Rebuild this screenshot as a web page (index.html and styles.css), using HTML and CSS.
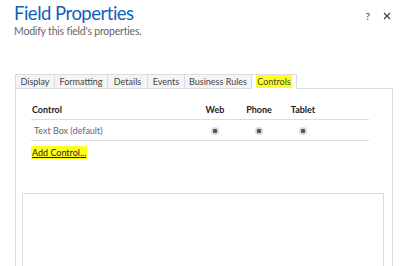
FILE: index.html
```html
<!DOCTYPE html>
<html lang="en">
<head>
    <meta charset="UTF-8">
    <title>Field Properties</title>
    <link rel="stylesheet" href="styles.css">
</head>
<body>
    <div class="dialog">
        <div class="header">
            <div class="titles">
                <h1>Field Properties</h1>
                <p class="subtitle">Modify this field's properties.</p>
            </div>
            <div class="actions">
                <span class="help">?</span>
                <svg class="close" width="8" height="8" viewBox="0 0 8 8">
                    <path d="M1 1 L7 7 M7 1 L1 7" stroke="#444" stroke-width="1.2" fill="none"/>
                </svg>
            </div>
        </div>
        <div class="tabs">
            <div class="tab tab-display">Display</div>
            <div class="tab tab-formatting">Formatting</div>
            <div class="tab tab-details">Details</div>
            <div class="tab tab-events">Events</div>
            <div class="tab tab-rules">Business Rules</div>
            <div class="tab tab-controls active"><span class="mark">Controls</span></div>
            <div class="tab-rest"></div>
        </div>
        <div class="panel">
            <div class="grid">
                <div class="row head">
                    <div class="col-name">Control</div>
                    <div class="col">Web</div>
                    <div class="col">Phone</div>
                    <div class="col">Tablet</div>
                </div>
                <div class="row">
                    <div class="col-name muted">Text Box (default)</div>
                    <div class="col"><span class="radio"></span></div>
                    <div class="col"><span class="radio"></span></div>
                    <div class="col"><span class="radio"></span></div>
                </div>
            </div>
            <div class="add"><span class="mark link">Add Control...</span></div>
            <div class="props"></div>
        </div>
    </div>
</body>
</html>
```
FILE: styles.css
```css
html, body {
    margin: 0;
    padding: 0;
    background-color: #fff;
    overflow: hidden;
}
body {
    font-family: Lato, "Noto Sans", sans-serif;
    color: #333;
}
.dialog {
    width: 400px;
    height: 266px;
}
.header {
    display: flex;
    justify-content: space-between;
    padding: 2px 0 0 14px;
}
h1 {
    margin: 0;
    font-size: 18.5px;
    font-weight: 400;
    line-height: 22px;
    color: #1160b7;
    letter-spacing: -0.5px;
}
.subtitle {
    margin: 0;
    font-size: 10.5px;
    line-height: 14px;
    color: #666;
    letter-spacing: -0.2px;
}
.actions {
    display: flex;
    align-items: center;
    gap: 13px;
    height: 16px;
    padding: 6px 9px 0 0;
    font-size: 10px;
    color: #444;
}
.tabs {
    display: flex;
    margin: 36px 0 0 15px;
    width: 378px;
    height: 15px;
    font-size: 9px;
    line-height: 14px;
}
.tab {
    box-sizing: border-box;
    border: 1px solid #ddd;
    border-left: none;
    background-color: #f4f4f4;
    text-align: center;
    color: #444;
}
.tab-display {
    border-left: 1px solid #ddd;
    width: 40px;
}
.tab-formatting { width: 53px; }
.tab-details { width: 40px; }
.tab-events { width: 37px; }
.tab-rules { width: 67px; }
.tab-controls {
    width: 45px;
    background-color: #fff;
    border-bottom: none;
}
.tab-rest {
    flex: 1;
    border-bottom: 1px solid #ddd;
}
.mark {
    background-color: #ffff20;
    padding: 1px 1px;
}
.panel {
    width: 378px;
    height: 200px;
    margin-left: 15px;
    box-sizing: border-box;
    border: 1px solid #ddd;
    border-top: none;
    padding: 10px 0 0 0;
}
.grid {
    margin-left: 15px;
    width: 338px;
    font-size: 9px;
}
.row {
    display: flex;
    align-items: center;
    height: 20px;
    border-bottom: 1px solid #ddd;
}
.head {
    font-weight: 700;
    color: #222;
}
.col-name {
    width: 161px;
    padding-left: 1px;
}
.muted {
    color: #666;
    padding-left: 3px;
    width: 159px;
}
.col {
    width: 44px;
    text-align: center;
}
.radio {
    display: inline-block;
    width: 8px;
    height: 8px;
    border-radius: 50%;
    background: radial-gradient(circle, #555 0 2px, #d8d8d8 2.5px 4px);
    vertical-align: middle;
}
.add {
    margin: 6px 0 0 15px;
    font-size: 9px;
    line-height: 12px;
}
.link {
    color: #222;
    text-decoration: underline;
}
.props {
    margin: 34px 0 0 6px;
    width: 362px;
    height: 100px;
    box-sizing: border-box;
    border: 1px solid #ddd;
}
```
